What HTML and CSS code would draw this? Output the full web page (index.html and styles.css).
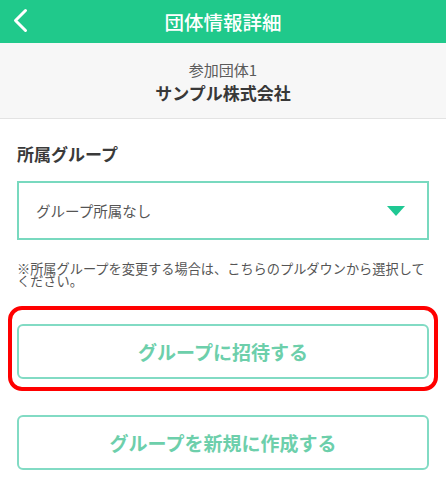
FILE: index.html
```html
<!DOCTYPE html>
<html lang="ja">
<head>
<meta charset="utf-8">
<title>団体情報詳細</title>
<link rel="stylesheet" href="styles.css">
</head>
<body>
<header class="topbar">
  <span class="back">
    <svg width="40" height="43" viewBox="0 0 40 43"><polyline points="25.5,10.5 15.5,20.5 25.5,30.5" fill="none" stroke="#ffffff" stroke-width="3" stroke-linecap="round" stroke-linejoin="round"/></svg>
  </span>
  <h1 class="title">団体情報詳細</h1>
</header>
<section class="info">
  <div class="info-sub">参加団体1</div>
  <div class="info-name">サンプル株式会社</div>
</section>
<main class="content">
  <h2 class="label">所属グループ</h2>
  <div class="select">
    <span class="select-text">グループ所属なし</span>
    <span class="caret"></span>
  </div>
  <p class="note">※所属グループを変更する場合は、こちらのプルダウンから選択してください。</p>
  <div class="highlight">
    <button class="btn">グループに招待する</button>
  </div>
  <button class="btn btn-second">グループを新規に作成する</button>
</main>
</body>
</html>
```
FILE: styles.css
```css
html, body {
  margin: 0;
  padding: 0;
  background: #ffffff;
  font-family: "Noto Sans CJK JP", "Noto Sans", sans-serif;
}
.topbar {
  position: relative;
  height: 43px;
  background: #20c98b;
  display: flex;
  align-items: center;
  justify-content: center;
}
.back {
  position: absolute;
  left: 0;
  top: 0;
  height: 43px;
}
.back svg { display: block; }
.title {
  margin: 0;
  font-size: 19.5px;
  font-weight: 500;
  color: #ffffff;
  line-height: 41px;
}
.info {
  height: 76px;
  box-sizing: border-box;
  padding-top: 17px;
  background: #f7f7f7;
  border-bottom: 1px solid #e3e3e3;
  text-align: center;
}
.info-sub {
  font-size: 15px;
  line-height: 20px;
  color: #5a5a5a;
}
.info-name {
  font-size: 17px;
  line-height: 26px;
  font-weight: 700;
  color: #383838;
}
.content {
  padding: 0 17px 0 17px;
}
.label {
  margin: 23px 0 0 0;
  font-size: 17px;
  line-height: 24px;
  font-weight: 700;
  color: #3a3a3a;
}
.select {
  margin-top: 15px;
  height: 59px;
  box-sizing: border-box;
  border: 2px solid #78d9bf;
  display: flex;
  align-items: center;
  justify-content: space-between;
  padding: 0 22px 0 17px;
}
.select-text {
  font-size: 14.5px;
  color: #555555;
}
.caret {
  width: 0;
  height: 0;
  border-left: 9px solid transparent;
  border-right: 9px solid transparent;
  border-top: 10px solid #1fc893;
}
.note {
  margin: 23px 0 0 0;
  font-size: 13.2px;
  line-height: 12px;
  color: #555555;
}
.highlight {
  position: relative;
  margin-top: 37px;
}
.highlight::after {
  content: "";
  position: absolute;
  left: -9px;
  right: -9px;
  top: -18px;
  bottom: -12px;
  border: 4px solid #ff0000;
  border-radius: 14px;
  pointer-events: none;
}
.btn {
  display: block;
  width: 100%;
  height: 55px;
  box-sizing: border-box;
  border: 2px solid #82dbc4;
  border-radius: 6px;
  background: #ffffff;
  font-family: "Noto Sans CJK JP", "Noto Sans", sans-serif;
  font-size: 19px;
  font-weight: 700;
  color: #6dcfab;
  padding: 0;
}
.btn-second {
  margin-top: 36px;
}
```
